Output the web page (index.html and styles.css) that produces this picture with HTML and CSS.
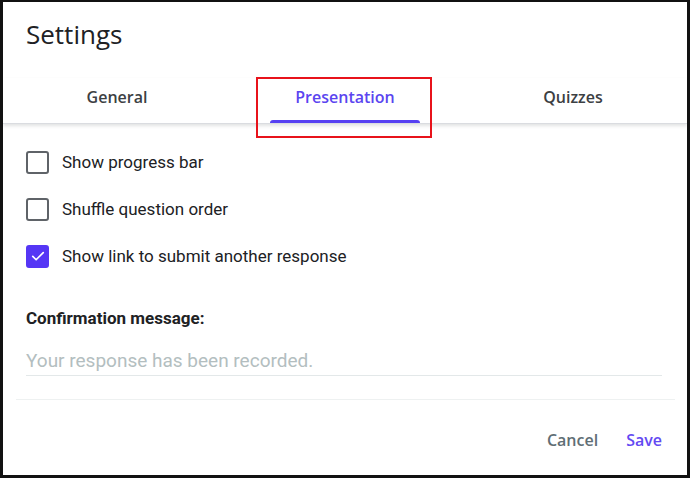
FILE: index.html
```html
<!DOCTYPE html>
<html>
<head>
<meta charset="utf-8">
<link rel="stylesheet" href="styles.css">
</head>
<body>
<div class="frame">
  <h1 class="title">Settings</h1>
  <div class="tabs">
    <div class="tab">General</div>
    <div class="tab active">Presentation<span class="indicator"></span><span class="highlight"></span></div>
    <div class="tab">Quizzes</div>
  </div>
  <div class="content">
    <label class="row"><span class="box"></span><span class="label">Show progress bar</span></label>
    <label class="row"><span class="box"></span><span class="label">Shuffle question order</span></label>
    <label class="row"><span class="box checked"><svg viewBox="0 0 24 24" width="18" height="18"><path d="M5 12.5l4.5 4.5L19 7.5" fill="none" stroke="#fff" stroke-width="2.2" stroke-linecap="round" stroke-linejoin="round"/></svg></span><span class="label">Show link to submit another response</span></label>
    <div class="confirm">Confirmation message:</div>
    <div class="input">Your response has been recorded.</div>
  </div>
  <div class="divider"></div>
  <div class="actions">
    <span class="btn cancel">Cancel</span>
    <span class="btn save">Save</span>
  </div>
</div>
</body>
</html>
```
FILE: styles.css
```css
* { box-sizing: border-box; }
html, body { margin: 0; padding: 0; background: #fff; }
.frame {
  width: 690px;
  height: 478px;
  border: 3px solid #111;
  border-top-width: 2px;
  background: #fff;
  font-family: Roboto, "Liberation Sans", sans-serif;
  color: #202124;
  overflow: hidden;
  display: flex;
  flex-direction: column;
}
.title {
  margin: 0;
  padding: 16px 0 0 23px;
  font-family: "Open Sans", sans-serif;
  font-weight: 400;
  font-size: 26px;
  line-height: 32px;
  color: #202124;
  height: 76px;
}
.tabs {
  display: grid;
  grid-template-columns: 1fr 1fr 1fr;
  height: 46px;
  border-bottom: 1px solid #dadce0;
  box-shadow: 0 2px 3px rgba(60, 64, 67, 0.15);
  position: relative;
}
.tab {
  position: relative;
  display: flex;
  align-items: center;
  justify-content: center;
  font-family: "Open Sans", sans-serif;
  font-size: 16px;
  font-weight: 600;
  color: #3c4043;
  padding-bottom: 8px;
}
.tab.active { color: #5b45f0; }
.indicator {
  position: absolute;
  bottom: 0;
  left: 50%;
  width: 150px;
  margin-left: -75px;
  height: 3px;
  background: #5640f2;
  border-radius: 3px 3px 0 0;
}
.highlight {
  position: absolute;
  left: 50%;
  width: 176px;
  margin-left: -89px;
  top: -1px;
  height: 61px;
  border: 2px solid #e8131b;
}
.content {
  padding: 26px 0 0 23px;
  display: flex;
  flex-direction: column;
}
.row {
  display: flex;
  align-items: center;
  height: 24px;
  margin-bottom: 23px;
}
.box {
  width: 23px;
  height: 23px;
  border: 2px solid #5f6368;
  border-radius: 3px;
  margin-right: 13px;
  display: flex;
  align-items: center;
  justify-content: center;
}
.box.checked {
  background: #5536f5;
  border-color: #5536f5;
}
.label {
  font-size: 17px;
  color: #202124;
}
.confirm {
  margin-top: 17px;
  font-size: 17px;
  font-weight: 700;
  color: #202124;
}
.input {
  margin-top: 21px;
  width: 636px;
  font-size: 19px;
  color: #b3bec0;
  padding-bottom: 3px;
  border-bottom: 1px solid #e3e8e9;
}
.divider {
  margin: 23px 12px 0 13px;
  height: 1px;
  background: #eef1f1;
}
.actions {
  display: flex;
  justify-content: flex-end;
  align-items: center;
  padding: 29px 25px 0 0;
  gap: 28px;
}
.btn {
  font-family: "Open Sans", sans-serif;
  font-size: 16px;
  font-weight: 600;
}
.cancel { color: #5f6e75; }
.save { color: #6349f2; }
```
